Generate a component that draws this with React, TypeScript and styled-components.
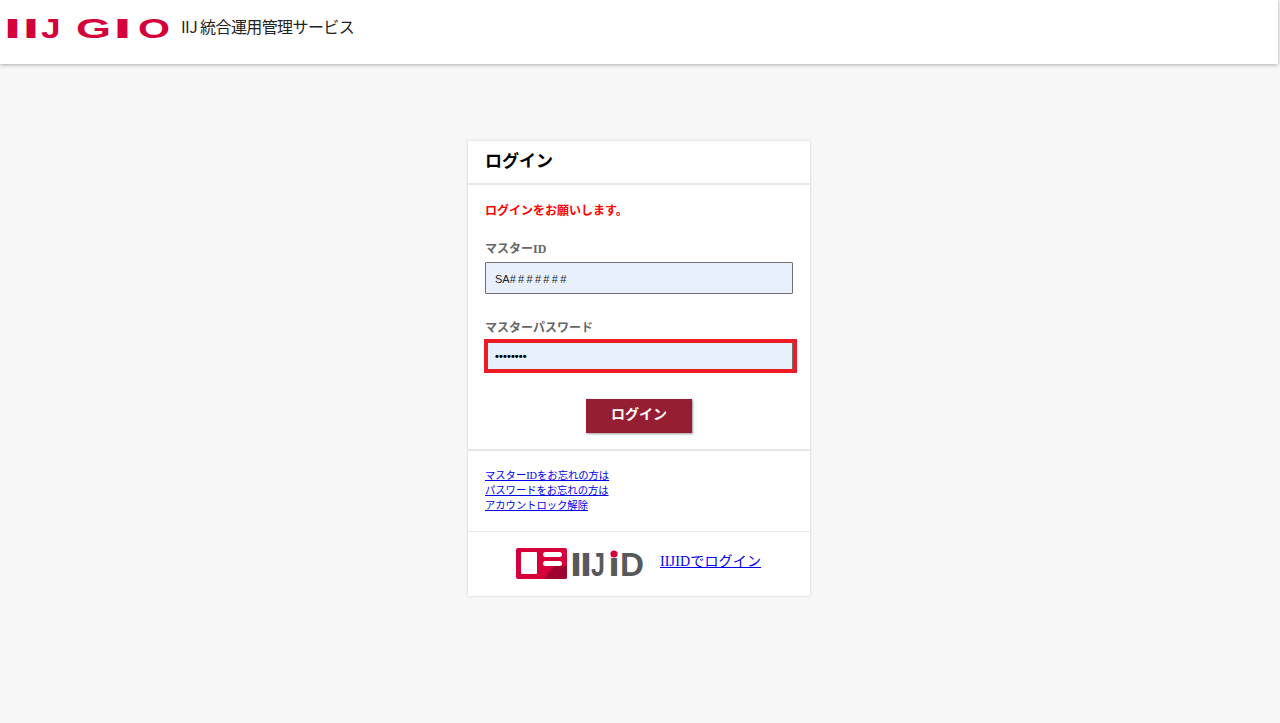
import React from "react";
import styled, { createGlobalStyle } from "styled-components";

const Global = createGlobalStyle`
  html, body { margin: 0; padding: 0; height: 100%; }
  body { background: #f7f7f7; font-family: "Liberation Sans", "Noto Sans CJK JP", sans-serif; overflow: hidden; }
`;
const Page = styled.div`display: flex; flex-direction: column; align-items: center; height: 723px; padding-right: 2px; box-sizing: border-box;`;
const Header = styled.header`
  align-self: stretch; height: 64px; background: #fff;
  box-shadow: 0 1px 4px rgba(0,0,0,.3);
  display: flex; align-items: flex-start; padding: 16px 0 0 8px; box-sizing: border-box; gap: 11px;
`;
const LogoSvg = styled.svg`display: block; width: 162px; height: 24px; overflow: visible;`;
const LogoText = styled.text`font-family: "Liberation Sans", sans-serif; font-weight: 700; font-size: 27.4px; fill: #d4003a;`;
const ServiceName = styled.div`
  font: 400 16px/22px "Noto Sans CJK JP", sans-serif; color: #222; letter-spacing: -0.6px; white-space: nowrap; margin-top: -1px;
`;
const Card = styled.main`
  width: 342px; margin-top: 77px; background: #fff; box-shadow: 0 0 3px rgba(0,0,0,.18); border-radius: 2px;
`;
const Title = styled.h1`
  margin: 0; height: 42px; box-sizing: border-box; padding: 7px 17px 0; font: 700 17px/24px "Noto Sans CJK JP", sans-serif; color: #000;
`;
const Section = styled.section`border-top: 2px solid #e6e6e6; padding: 17px 17px 0; height: 266px; box-sizing: border-box;`;
const ErrorText = styled.p`margin: 0 0 23px; font: 700 12px/16px "Noto Sans CJK JP", sans-serif; color: #f00;`;
const Label = styled.label`display: block; font: 700 12px/16px "Liberation Serif", "Noto Sans CJK JP", serif; color: #666; margin-bottom: 5px;`;
const Field = styled.div<{ $gap: number }>`margin-bottom: ${p => p.$gap}px;`;
const Input = styled.div<{ $error?: boolean }>`
  width: ${p => (p.$error ? "313px" : "308px")}; height: ${p => (p.$error ? "34px" : "32px")}; box-sizing: border-box; background: #e8f0fe;
  border: ${p => (p.$error ? "4px solid #ed1c24" : "1px solid #707070")};
  border-radius: ${p => (p.$error ? "0" : "1px")};
  margin: ${p => (p.$error ? "-2px 0 0 -1px" : "0")};
  padding: ${p => (p.$error ? "0 0 0 7px" : "1px 0 0 9px")};
  box-shadow: ${p => (p.$error ? "inset -1px 0 0 #707070" : "none")};
  display: flex; align-items: center;
  font: 400 11px/14px "Liberation Sans", sans-serif; color: #222;
`;
const Hash = styled.span`letter-spacing: 2.3px;`;
const Dots = styled.span`font-size: 11px; font-weight: 700; color: #000; letter-spacing: .12px;`;
const ButtonRow = styled.div`display: flex; justify-content: center;`;
const LoginButton = styled.button`
  width: 106px; height: 34px; background: #961e32; color: #fff; border: 0; padding: 0 0 7px;
  box-shadow: 1px 1px 2px rgba(0,0,0,.4); font: 700 14px/20px "Noto Sans CJK JP", sans-serif;
`;
const Links = styled.nav`
  border-top: 2px solid #e6e6e6; height: 83px; box-sizing: border-box; padding: 17px 17px 0;
  display: flex; flex-direction: column; border-bottom: 1px solid #e9e9e9;
`;
const SmallLink = styled.a`font: 400 10.3px/15px "Liberation Serif", "Noto Sans CJK JP", serif; color: #00e; text-decoration: underline;`;
const Footer = styled.div`height: 64px; display: flex; align-items: center; padding-left: 48px; gap: 17px; box-sizing: border-box;`;
const IdLogo = styled.svg`display: block; width: 127px; height: 32px; overflow: visible;`;
const IdText = styled.text`font-family: "Liberation Sans", sans-serif; font-weight: 700; font-size: 33px; fill: #58595b;`;
const IdLink = styled.a`font: 400 14px/20px "Liberation Serif", "Noto Sans CJK JP", serif; color: #00e; text-decoration: underline; margin-top: -4px; letter-spacing: .15px;`;

const gioLetters: [string, number, number][] = [
  ["I", -4.5, 18],
  ["I", 14.5, 17],
  ["J", 33, 19.5],
  ["G", 68, 35],
  ["I", 105, 19],
  ["O", 130, 32],
];

const idLetters: [string, number, number][] = [
  ["I", 54, 12],
  ["I", 64, 12],
  ["J", 75, 14],
  ["ı", 92, 12],
  ["D", 104, 24],
];

export default function App() {
  return (
    <>
      <Global />
      <Page>
        <Header>
          <LogoSvg viewBox="0 0 162 24">
            {gioLetters.map(([c, x, w], i) => (
              <LogoText key={i} x={x} y={22} textLength={w} lengthAdjust="spacingAndGlyphs">{c}</LogoText>
            ))}
          </LogoSvg>
          <ServiceName>IIJ 統合運用管理サービス</ServiceName>
        </Header>
        <Card>
          <Title>ログイン</Title>
          <Section>
            <ErrorText>ログインをお願いします。</ErrorText>
            <Field $gap={26}>
              <Label>マスターID</Label>
              <Input>SA<Hash>#######</Hash></Input>
            </Field>
            <Field $gap={26}>
              <Label>マスターパスワード</Label>
              <Input $error><Dots>••••••••</Dots></Input>
            </Field>
            <ButtonRow><LoginButton>ログイン</LoginButton></ButtonRow>
          </Section>
          <Links>
            <SmallLink href="#">マスターIDをお忘れの方は</SmallLink>
            <SmallLink href="#">パスワードをお忘れの方は</SmallLink>
            <SmallLink href="#">アカウントロック解除</SmallLink>
          </Links>
          <Footer>
            <IdLogo viewBox="0 0 127 32">
              <rect x="0" y="0" width="51" height="31" rx="2" fill="#d5003a" />
              <path d="M28 31 L38 18 H51 V29 a2 2 0 0 1 -2 2 Z" fill="#a00030" />
              <rect x="5" y="4" width="16" height="22" rx="1" fill="#fff" />
              <rect x="27" y="4" width="19" height="5" rx="2.5" fill="#fff" />
              <rect x="27" y="13" width="19" height="5" rx="2.5" fill="#fff" />
              {idLetters.map(([c, x, w], i) => (
                <IdText key={i} x={x} y={28} textLength={w} lengthAdjust="spacingAndGlyphs">{c}</IdText>
              ))}
              <circle cx="98" cy="6" r="3.6" fill="#d5003a" />
            </IdLogo>
            <IdLink href="#">IIJIDでログイン</IdLink>
          </Footer>
        </Card>
      </Page>
    </>
  );
}
